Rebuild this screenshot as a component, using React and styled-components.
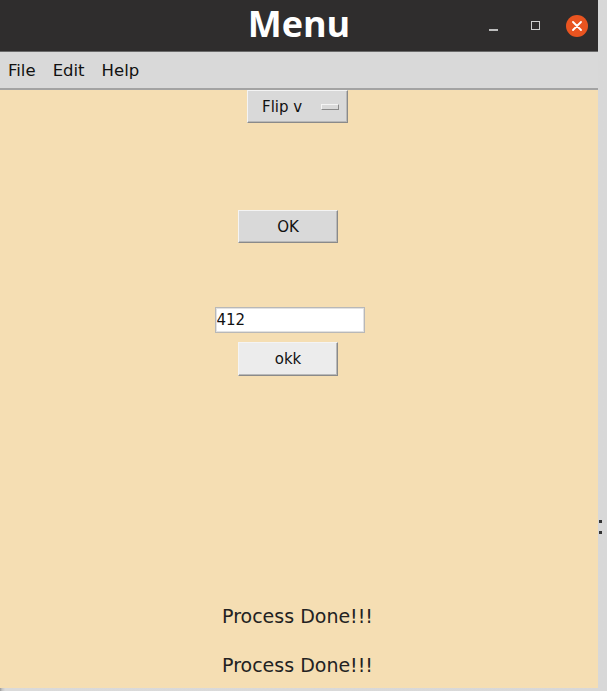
import React from 'react'
import styled, { createGlobalStyle } from 'styled-components';

const Global = createGlobalStyle`
    html, body {
        margin: 0;
        padding: 0;
        background: #d6d6d6;
    }
    body {
        font-family: "DejaVu Sans", "Noto Sans", sans-serif;
    }
`;

const Desktop = styled.div`
    display: flex;
    width: 607px;
    height: 691px;
    overflow: hidden;
    background: linear-gradient(to right, #9a9a9a 0, #c4c4c4 2px, #dadada 5px, #d8d8d8 100%);
`;

const Window = styled.div`
    width: 598px;
    height: 688px;
    display: flex;
    flex-direction: column;
    flex-shrink: 0;
`;

const Edge = styled.div`
    flex: 1;
    position: relative;
`;

const Dot = styled.span`
    position: absolute;
    left: 1px;
    top: ${p => p.top}px;
    width: 3px;
    height: 3px;
    background: #333;
`;

const TitleBar = styled.div`
    height: 51px;
    background: #2f2d2d;
    border-bottom: 1px solid #6a6a6a;
    display: flex;
    align-items: center;
    justify-content: center;
    position: relative;
`;

const Title = styled.h1`
    margin: 0;
    color: #ffffff;
    font-family: "Open Sans", "DejaVu Sans", sans-serif;
    font-weight: 700;
    font-size: 36px;
    line-height: 1;
    margin-top: -3px;
`;

const Controls = styled.div`
    position: absolute;
    right: 0;
    top: 0;
    height: 100%;
    display: flex;
    align-items: center;
`;

const Ctrl = styled.div`
    width: 42px;
    height: 24px;
    display: flex;
    align-items: center;
    justify-content: center;
`;

const Minimize = styled.span`
    width: 9px;
    height: 2px;
    background: #bdbdbd;
    margin-top: 8px;
`;

const Maximize = styled.span`
    width: 7px;
    height: 7px;
    border: 1.5px solid #cfcfcf;
`;

const Close = styled.span`
    width: 22px;
    height: 22px;
    border-radius: 50%;
    background: #e95420;
    display: flex;
    align-items: center;
    justify-content: center;
`;

const MenuBar = styled.div`
    height: 36px;
    background: #d9d9d9;
    border-bottom: 2px solid #a3a3a3;
    display: flex;
    align-items: center;
    padding-left: 8px;
    gap: 17px;
`;

const MenuItem = styled.span`
    font-size: 16.5px;
    color: #111;
    margin-top: 1px;
`;

const Content = styled.div`
    flex: 1;
    background: #f5deb3;
    display: flex;
    flex-direction: column;
    align-items: center;
    padding-right: 3px;
    padding-bottom: 10px;
`;

const Group = styled.div`
    display: flex;
    flex-direction: column;
    align-items: center;
    margin-right: 19px;
`;

const Button = styled.button`
    width: ${p => p.w}px;
    height: ${p => p.h}px;
    margin-top: ${p => p.mt}px;
    background: ${p => p.active ? '#ececec' : '#d9d9d9'};
    border: 1px solid;
    border-color: #f4f4f4 #8a8a8a #8a8a8a #f4f4f4;
    box-shadow: inset -1px -1px 0 #b9b9b9;
    font-family: "DejaVu Sans", "Noto Sans", sans-serif;
    font-size: 15px;
    color: #111;
    padding: 0;
    cursor: pointer;
`;

const OptionButton = styled(Button)`
    display: flex;
    align-items: center;
    justify-content: space-between;
    padding: 0 8px 0 14px;
`;

const Indicator = styled.span`
    width: 16px;
    height: 4px;
    background: #d9d9d9;
    border: 1px solid;
    border-color: #f4f4f4 #8a8a8a #8a8a8a #f4f4f4;
`;

const Entry = styled.input`
    box-sizing: border-box;
    width: 150px;
    height: 26px;
    margin-top: 64px;
    margin-left: 3px;
    border: 1px solid #b8b8b8;
    box-shadow: inset 0 0 0 1px #e2e2e2;
    background: #fff;
    font-family: "DejaVu Sans", "Noto Sans", sans-serif;
    font-size: 15px;
    color: #111;
    padding: 0 1px;
    outline: none;
`;

const Spacer = styled.div`
    flex: 1;
`;

const Status = styled.p`
    margin: 0;
    font-size: 19px;
    line-height: 26px;
    color: #222;
    & + & {
        margin-top: 23px;
    }
`;

export default function App() {
    return (
        <Desktop>
            <Global />
            <Window>
                <TitleBar>
                    <Title>Menu</Title>
                    <Controls>
                        <Ctrl><Minimize /></Ctrl>
                        <Ctrl><Maximize /></Ctrl>
                        <Ctrl>
                            <Close>
                                <svg width="10" height="10" viewBox="0 0 10 10">
                                    <path d="M1 1 L9 9 M9 1 L1 9" stroke="#fff" strokeWidth="1.8" strokeLinecap="round" />
                                </svg>
                            </Close>
                        </Ctrl>
                    </Controls>
                </TitleBar>
                <MenuBar>
                    <MenuItem>File</MenuItem>
                    <MenuItem>Edit</MenuItem>
                    <MenuItem>Help</MenuItem>
                </MenuBar>
                <Content>
                    <OptionButton w={101} h={33} mt={0}>
                        Flip v
                        <Indicator />
                    </OptionButton>
                    <Group>
                        <Button w={100} h={33} mt={87}>OK</Button>
                        <Entry defaultValue="412" />
                        <Button w={100} h={34} mt={9} active>okk</Button>
                    </Group>
                    <Spacer />
                    <Status>Process Done!!!</Status>
                    <Status>Process Done!!!</Status>
                </Content>
            </Window>
            <Edge>
                <Dot top={520} />
                <Dot top={531} />
            </Edge>
        </Desktop>
    )
}
